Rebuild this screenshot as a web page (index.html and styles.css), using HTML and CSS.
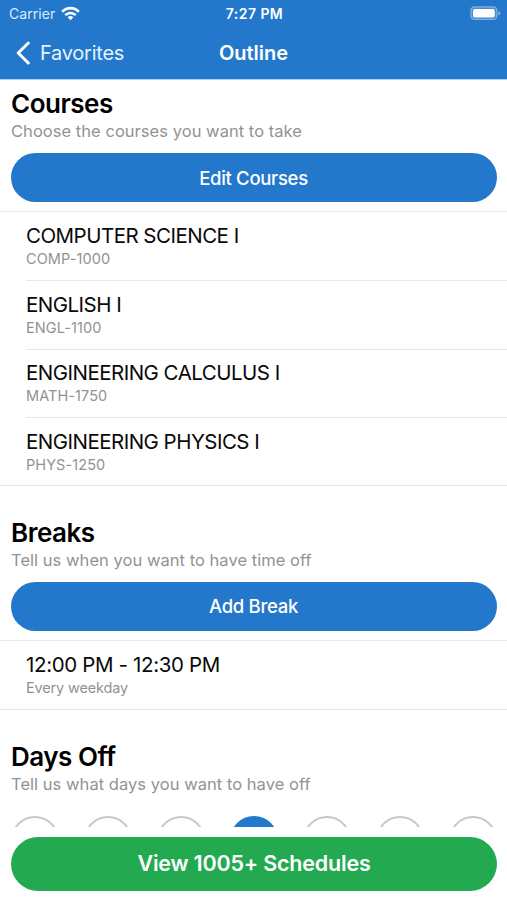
FILE: index.html
```html
<!DOCTYPE html>
<html lang="en">
<head>
<meta charset="utf-8">
<title>Outline</title>
<link rel="stylesheet" href="styles.css">
</head>
<body>
<div class="app">
  <header class="top">
    <div class="status">
      <div class="carrier"><span class="carrier-name">Carrier</span>
        <svg class="wifi" viewBox="0 0 19 15" width="19" height="15" fill="none" stroke="#fff" stroke-width="2.6">
          <path d="M1.2 5.8C5.8 .9 13.200 .9 17.800 5.800"/><path d="M4.300 9.200C7.200 6.200 11.800 6.200 14.700 9.200"/><path d="M9.500 14.200L6.600 11.200Q9.500 8.800 12.400 11.200Z" fill="#fff" stroke="none"/>
        </svg>
      </div>
      <div class="clock">7:27 PM</div>
      <svg class="battery" viewBox="0 0 31 15" width="31" height="15">
        <rect x=".9" y=".9" width="26" height="12.600" rx="3.600" fill="#fff" fill-opacity=".15" stroke="#fff" stroke-opacity=".4" stroke-width="1.200"/>
        <rect x="3" y="3" width="21.800" height="8.500" rx="1.800" fill="#fff"/>
        <path d="M28.500 5v4.600Q30.200 8.900 30.200 7.300T28.500 5Z" fill="#fff" fill-opacity=".5"/>
      </svg>
    </div>
    <nav class="nav">
      <a class="back"><svg viewBox="0 0 16 24" width="16" height="24" fill="none" stroke="#fff" stroke-width="3" stroke-linecap="round" stroke-linejoin="round"><path d="M13.300 2L3.200 12L13.300 22"/></svg><span class="back-label">Favorites</span></a>
      <h1 class="title">Outline</h1>
    </nav>
  </header>
  <main class="content">
    <section class="section">
      <h2 class="heading">Courses</h2>
      <p class="hint">Choose the courses you want to take</p>
      <button class="btn">Edit Courses</button>
      <ul class="list">
        <li class="row"><div class="name">COMPUTER SCIENCE I</div><div class="code">COMP-1000</div></li>
        <li class="row"><div class="name">ENGLISH I</div><div class="code">ENGL-1100</div></li>
        <li class="row"><div class="name">ENGINEERING CALCULUS I</div><div class="code">MATH-1750</div></li>
        <li class="row"><div class="name">ENGINEERING PHYSICS I</div><div class="code">PHYS-1250</div></li>
      </ul>
    </section>
    <section class="section">
      <h2 class="heading">Breaks</h2>
      <p class="hint">Tell us when you want to have time off</p>
      <button class="btn">Add Break</button>
      <ul class="list">
        <li class="row"><div class="name time">12:00 PM - 12:30 PM</div><div class="code every">Every weekday</div></li>
      </ul>
    </section>
    <section class="section">
      <h2 class="heading">Days Off</h2>
      <p class="hint">Tell us what days you want to have off</p>
      <div class="days"><i class="day"></i><i class="day"></i><i class="day"></i><i class="day on"></i><i class="day"></i><i class="day"></i><i class="day"></i></div>
    </section>
  </main>
  <footer class="bottom"><button class="view">View 1005+ Schedules</button></footer>
</div>
</body>
</html>
```
FILE: styles.css
```css
* { box-sizing: border-box; }
body { margin: 0; background: #fff; font-family: Inter, "Liberation Sans", sans-serif; color: #090909; }
h1, h2, p, ul { margin: 0; padding: 0; }
button { border: 0; font-family: inherit; display: block; padding: 0; color: #fff; }
.app { width: 507px; height: 900px; display: flex; flex-direction: column; overflow: hidden; }
.top { flex: none; height: 80px; background: #2478cc; color: #fff; border-bottom: 1px solid #a9d3f7; }
.status { height: 27px; display: grid; grid-template-columns: 1fr auto 1fr; align-items: center; padding: 0 6px 0 9px; }
.carrier { display: flex; align-items: center; gap: 5.500px; font-size: 14px; letter-spacing: .05px; }
.carrier-name { color: #d9ebff; }
.clock { font-size: 14px; font-weight: 600; letter-spacing: .45px; margin-right: 1px; }
.battery { justify-self: end; }
.nav { height: 51px; display: grid; grid-template-columns: 1fr auto 1fr; align-items: center; padding: 0 15px; }
.back { display: flex; align-items: center; gap: 9px; font-size: 20px; letter-spacing: -.25px; color: #e4f2ff; }
.title { font-size: 20px; font-weight: 600; letter-spacing: -.05px; }
.content { flex: none; height: 747px; overflow: hidden; padding-top: 10px; }
.section { margin-bottom: 32.800px; }
.heading { font-size: 26px; line-height: 28px; font-weight: 600; letter-spacing: -.5px; color: #000; padding-left: 11px; }
.hint { margin-top: 3px; font-size: 16.500px; line-height: 20px; letter-spacing: .04px; color: #939393; padding-left: 11px; }
.btn { margin: 12px 10px 9px 11px; width: 486px; height: 49px; border-radius: 25px; background: #2478cc; font-size: 18.500px; font-weight: 500; letter-spacing: -.3px; padding-right: 1px; }
.list { list-style: none; border-top: 1px solid #e7e7e7; border-bottom: 1px solid #e7e7e7; }
.row { height: 68.300px; margin-left: 26px; padding-top: 11px; }
.row + .row { border-top: 1px solid #e7e7e7; padding-top: 10.700px; }
.name { font-size: 20.500px; line-height: 25px; letter-spacing: -.52px; }
.name.time { letter-spacing: -.35px; }
.code { font-size: 14.500px; line-height: 18px; margin-top: 2px; letter-spacing: .08px; color: #929292; }
.code.every { letter-spacing: -.15px; }
.days { display: flex; justify-content: space-between; padding: 0 10px 0 11px; margin-top: 22px; }
.day { width: 48px; height: 48px; border-radius: 50%; border: 2px solid #c8c8c8; }
.day.on { background: #2478cc; border-color: #2478cc; }
.bottom { flex: none; padding: 9.500px 10px 0 11px; background: #fff; }
.view { width: 486px; height: 54px; border-radius: 27px; background: #23aa50; font-size: 21.500px; font-weight: 600; letter-spacing: -.2px; padding-bottom: 1px; }
```
